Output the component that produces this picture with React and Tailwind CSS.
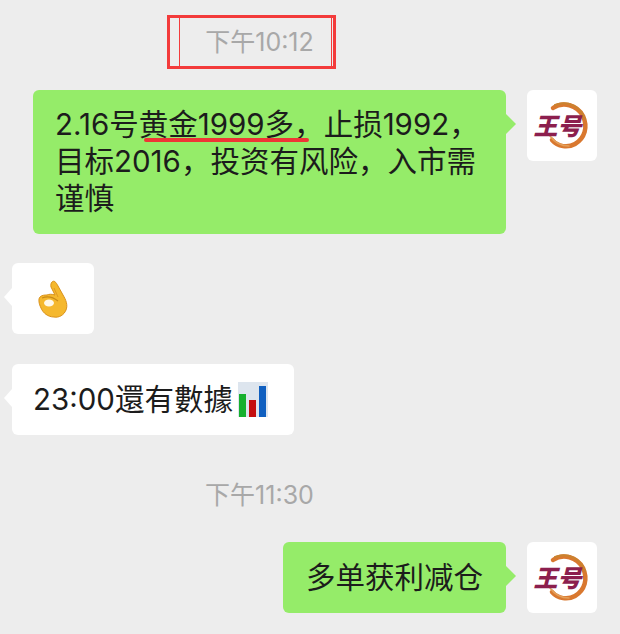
import React from 'react';

const cjk = { fontFamily: '"Inter", "Noto Sans CJK SC", sans-serif' };

// avatar: orange swirl ring with the two maroon characters on top
const Avatar = () => (
  <div className="relative w-[70px] h-[71px] shrink-0 rounded-md bg-white overflow-hidden">
    <svg className="absolute inset-0" width="70" height="71" viewBox="0 0 70 71" fill="none">
      <path d="M26 18 C36 11 50 15 56 26 C61 37 58 48 48 54 C41 58 31 57 25 50" stroke="#d9782f" strokeWidth="4.500" strokeLinecap="round" />
      <path d="M28 15 C41 10 54 17 58 29" stroke="#c9832f" strokeWidth="2" strokeLinecap="round" />
      <path d="M23 46 C28 53 35 56 42 56" stroke="#e3a05a" strokeWidth="1.500" strokeLinecap="round" />
    </svg>
    <div className="absolute inset-0 flex items-center justify-center pr-[9px] pb-[1px]">
      <span
        className="text-[24px] leading-none font-black italic text-[#8c1f4e]"
        style={{ fontFamily: '"Noto Sans CJK SC", sans-serif' }}
      >
        王号
      </span>
    </div>
  </div>
);

const OkHand = () => (
  <svg width="30" height="38" viewBox="0 0 30 38" fill="none">
    <path d="M14 2 C16 0 18 2 20 6 L25 15 C28 20 30 25 28 30 C26 35 21 38 16 37 C10 37 5 33 3 28 C1 24 0 19 2 17 C4 15 7 15 9 15 C11 14 14 14 17 15 L13 7 C12.500 5 13 3 14 2 Z" fill="#f5b82e" stroke="#d9911a" strokeWidth="1" />
    <ellipse cx="11" cy="23" rx="5" ry="3.500" fill="#fff8e8" />
    <path d="M4 18 C9 16 15 17 20 21" stroke="#c98a17" strokeWidth="1.200" />
    <path d="M16 8 L20 17" stroke="#e09a20" strokeWidth="1" />
  </svg>
);

const BarChart = () => (
  <svg width="30" height="35" viewBox="0 0 30 35" className="shrink-0">
    <rect width="30" height="35" fill="#dde5ee" />
    <rect x="1" y="12" width="7" height="23" fill="#16b02e" />
    <rect x="11" y="18" width="7" height="17" fill="#c40f0f" />
    <rect x="21" y="4" width="7" height="31" fill="#0f5fc0" />
  </svg>
);

const TailRight = () => (
  <div className="w-0 h-0 mt-[24px] border-y-[10px] border-y-transparent border-l-[10px] border-l-[#95ec69]" />
);

const TailLeft = () => (
  <div className="w-0 h-0 mt-[25px] border-y-[9px] border-y-transparent border-r-[8px] border-r-white" />
);

const TimeLabel = ({ children }) => (
  <div className="h-[24px] flex items-center justify-center text-[25px] leading-none text-[#a8a8a8] pr-[101px]">{children}</div>
);

export default function App() {
  return (
    <div className="w-[620px] h-[634px] bg-[#ededed] overflow-hidden text-[#1c1c1c] pt-[30px]" style={cjk}>
      <div className="relative">
        <TimeLabel>下午10:12</TimeLabel>
        {/* red annotation box drawn over the screenshot */}
        <div className="absolute left-[167px] top-[-15px] w-[169px] h-[54px] border-[3px] border-[#f33b3b]">
          <div className="absolute left-[9px] top-0 bottom-0 w-px bg-[#f33b3b]" />
          <div className="absolute right-[1px] top-0 bottom-0 w-px bg-[#f33b3b]" />
        </div>
      </div>

      <div className="flex justify-end pr-[23px] mt-[36px]">
        <div className="w-[473px] rounded-md bg-[#95ec69] pl-[22px] pt-[16px] pb-[17px] text-[29.500px] leading-[37px]">
          <div className="flex">
            <span>2.16号</span>
            <span className="relative">
              黄金1999多，
              <span className="absolute left-[5px] right-[15px] bottom-[1px] h-[4px] rounded-full bg-[#ef3535]" />
            </span>
            <span>止损1992，</span>
          </div>
          <div>目标2016，投资有风险，入市需</div>
          <div>谨慎</div>
        </div>
        <TailRight />
        <div className="w-[11px]" />
        <Avatar />
      </div>

      <div className="flex pl-[4px] mt-[29px]">
        <TailLeft />
        <div className="w-[82px] h-[71px] rounded-md bg-white flex items-center justify-center">
          <OkHand />
        </div>
      </div>

      <div className="flex pl-[4px] mt-[30px]">
        <TailLeft />
        <div className="h-[71px] w-[282px] rounded-md bg-white flex items-center pl-[21px] text-[29.500px] leading-[37px]">
          <span>23:00還有數據</span>
          <span className="ml-[5px] flex"><BarChart /></span>
        </div>
      </div>

      <div className="mt-[48px]">
        <TimeLabel>下午11:30</TimeLabel>
      </div>

      <div className="flex justify-end pr-[23px] mt-[35px]">
        <div className="h-[71px] w-[223px] rounded-md bg-[#95ec69] flex items-center pl-[23px] text-[29.500px] leading-[37px]">
          多单获利减仓
        </div>
        <TailRight />
        <div className="w-[11px]" />
        <Avatar />
      </div>
    </div>
  );
}
